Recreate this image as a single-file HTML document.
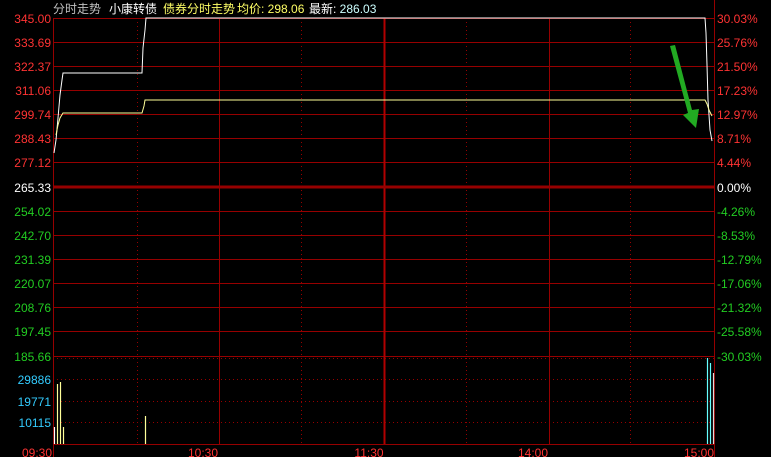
<!DOCTYPE html>
<html><head><meta charset="utf-8"><style>
body{margin:0;background:#000;width:771px;height:457px;overflow:hidden}
svg{display:block}
text{font-family:"Liberation Sans","Noto Sans CJK SC",sans-serif;font-size:12px}
</style></head><body>
<svg width="771" height="457" xmlns="http://www.w3.org/2000/svg">
<rect width="771" height="457" fill="#000"/>
<g stroke="#960000" stroke-width="1">
<line x1="53" y1="18.5" x2="714" y2="18.5"/>
<line x1="53" y1="42.5" x2="714" y2="42.5"/>
<line x1="53" y1="66.5" x2="714" y2="66.5"/>
<line x1="53" y1="90.5" x2="714" y2="90.5"/>
<line x1="53" y1="114.5" x2="714" y2="114.5"/>
<line x1="53" y1="138.5" x2="714" y2="138.5"/>
<line x1="53" y1="162.5" x2="714" y2="162.5"/>
<line x1="53" y1="211.5" x2="714" y2="211.5"/>
<line x1="53" y1="235.5" x2="714" y2="235.5"/>
<line x1="53" y1="259.5" x2="714" y2="259.5"/>
<line x1="53" y1="283.5" x2="714" y2="283.5"/>
<line x1="53" y1="307.5" x2="714" y2="307.5"/>
<line x1="53" y1="331.5" x2="714" y2="331.5"/>
<line x1="53" y1="356.5" x2="714" y2="356.5"/>
<line x1="53" y1="444.5" x2="714" y2="444.5"/>
<line x1="53.5" y1="18" x2="53.5" y2="457"/>
<line x1="714.5" y1="0" x2="714.5" y2="457"/>
<line x1="219.5" y1="18" x2="219.5" y2="444"/>
<line x1="549.5" y1="18" x2="549.5" y2="444"/>
</g>
<line x1="384.5" y1="18" x2="384.5" y2="444" stroke="#b00000" stroke-width="2"/>
<line x1="53" y1="187" x2="714" y2="187" stroke="#960000" stroke-width="3"/>
<g stroke="#960000" stroke-width="1" stroke-dasharray="1,3">
<line x1="137.5" y1="18" x2="137.5" y2="444"/>
<line x1="301.5" y1="18" x2="301.5" y2="444"/>
<line x1="466.5" y1="18" x2="466.5" y2="444"/>
<line x1="630.5" y1="18" x2="630.5" y2="444"/>
<line x1="53" y1="358.5" x2="714" y2="358.5"/>
<line x1="53" y1="379.5" x2="714" y2="379.5"/>
<line x1="53" y1="401.5" x2="714" y2="401.5"/>
<line x1="53" y1="422.5" x2="714" y2="422.5"/>
</g>
<polyline fill="none" stroke="#fff" stroke-width="1" points="54,153 56,140 58,118 60,95 62,80 63,73 142,73 143,48 145,30 146,18 705,18 706,33 707,65 708,100 710,130 712,141"/>
<polyline fill="none" stroke="#ffff99" stroke-width="1" points="56,135 58,125 60,118 63,113 142,113 144,106 145,100 705,100 707,104 709,110 712,116"/>
<polygon points="670,46 675,45 692,110 699,109 696,128 683,115 688,113" fill="#22aa22"/>
<g stroke-width="1.2">
<line x1="54.5" y1="427" x2="54.5" y2="444" stroke="#fff"/>
<line x1="57.5" y1="384" x2="57.5" y2="444" stroke="#ffff99"/>
<line x1="60.5" y1="382" x2="60.5" y2="444" stroke="#ffff99"/>
<line x1="63.5" y1="427" x2="63.5" y2="444" stroke="#ffff99"/>
<line x1="145.5" y1="416" x2="145.5" y2="444" stroke="#ffff99"/>
<line x1="707.5" y1="358" x2="707.5" y2="444" stroke="#66ffff"/>
<line x1="710.5" y1="363" x2="710.5" y2="444" stroke="#66ffff"/>
<line x1="713.5" y1="373" x2="713.5" y2="444" stroke="#ddd"/>
</g>
<text x="53" y="13" fill="#c0c0c0">分时走势</text>
<text x="109" y="13" fill="#fff">小康转债</text>
<text x="163" y="13" fill="#ffff66">债券分时走势</text>
<text x="237" y="13" fill="#ffff66">均价: 298.06</text>
<text x="309" y="13" fill="#fff">最新: <tspan fill="#ccffff">286.03</tspan></text>
<g text-anchor="end" fill="#ff3333">
<text x="51" y="23">345.00</text><text x="51" y="47">333.69</text><text x="51" y="71">322.37</text><text x="51" y="95">311.06</text><text x="51" y="119">299.74</text><text x="51" y="143">288.43</text><text x="51" y="167">277.12</text>
</g>
<text x="51" y="192" text-anchor="end" fill="#fff">265.33</text>
<g text-anchor="end" fill="#22cc22">
<text x="51" y="216">254.02</text><text x="51" y="240">242.70</text><text x="51" y="264">231.39</text><text x="51" y="288">220.07</text><text x="51" y="312">208.76</text><text x="51" y="336">197.45</text><text x="51" y="361">185.66</text>
</g>
<g text-anchor="end" fill="#33ccff">
<text x="51" y="384">29886</text><text x="51" y="406">19771</text><text x="51" y="427">10115</text>
</g>
<g fill="#ff3333">
<text x="717" y="23">30.03%</text><text x="717" y="47">25.76%</text><text x="717" y="71">21.50%</text><text x="717" y="95">17.23%</text><text x="717" y="119">12.97%</text><text x="717" y="143">8.71%</text><text x="717" y="167">4.44%</text>
</g>
<text x="717" y="192" fill="#fff">0.00%</text>
<g fill="#22cc22">
<text x="717" y="216">-4.26%</text><text x="717" y="240">-8.53%</text><text x="717" y="264">-12.79%</text><text x="717" y="288">-17.06%</text><text x="717" y="312">-21.32%</text><text x="717" y="336">-25.58%</text><text x="717" y="361">-30.03%</text>
</g>
<g fill="#ff3333" text-anchor="middle">
<text x="37" y="457">09:30</text><text x="203" y="457">10:30</text><text x="369" y="457">11:30</text><text x="533" y="457">14:00</text><text x="699" y="457">15:00</text>
</g>
</svg>
</body></html>
